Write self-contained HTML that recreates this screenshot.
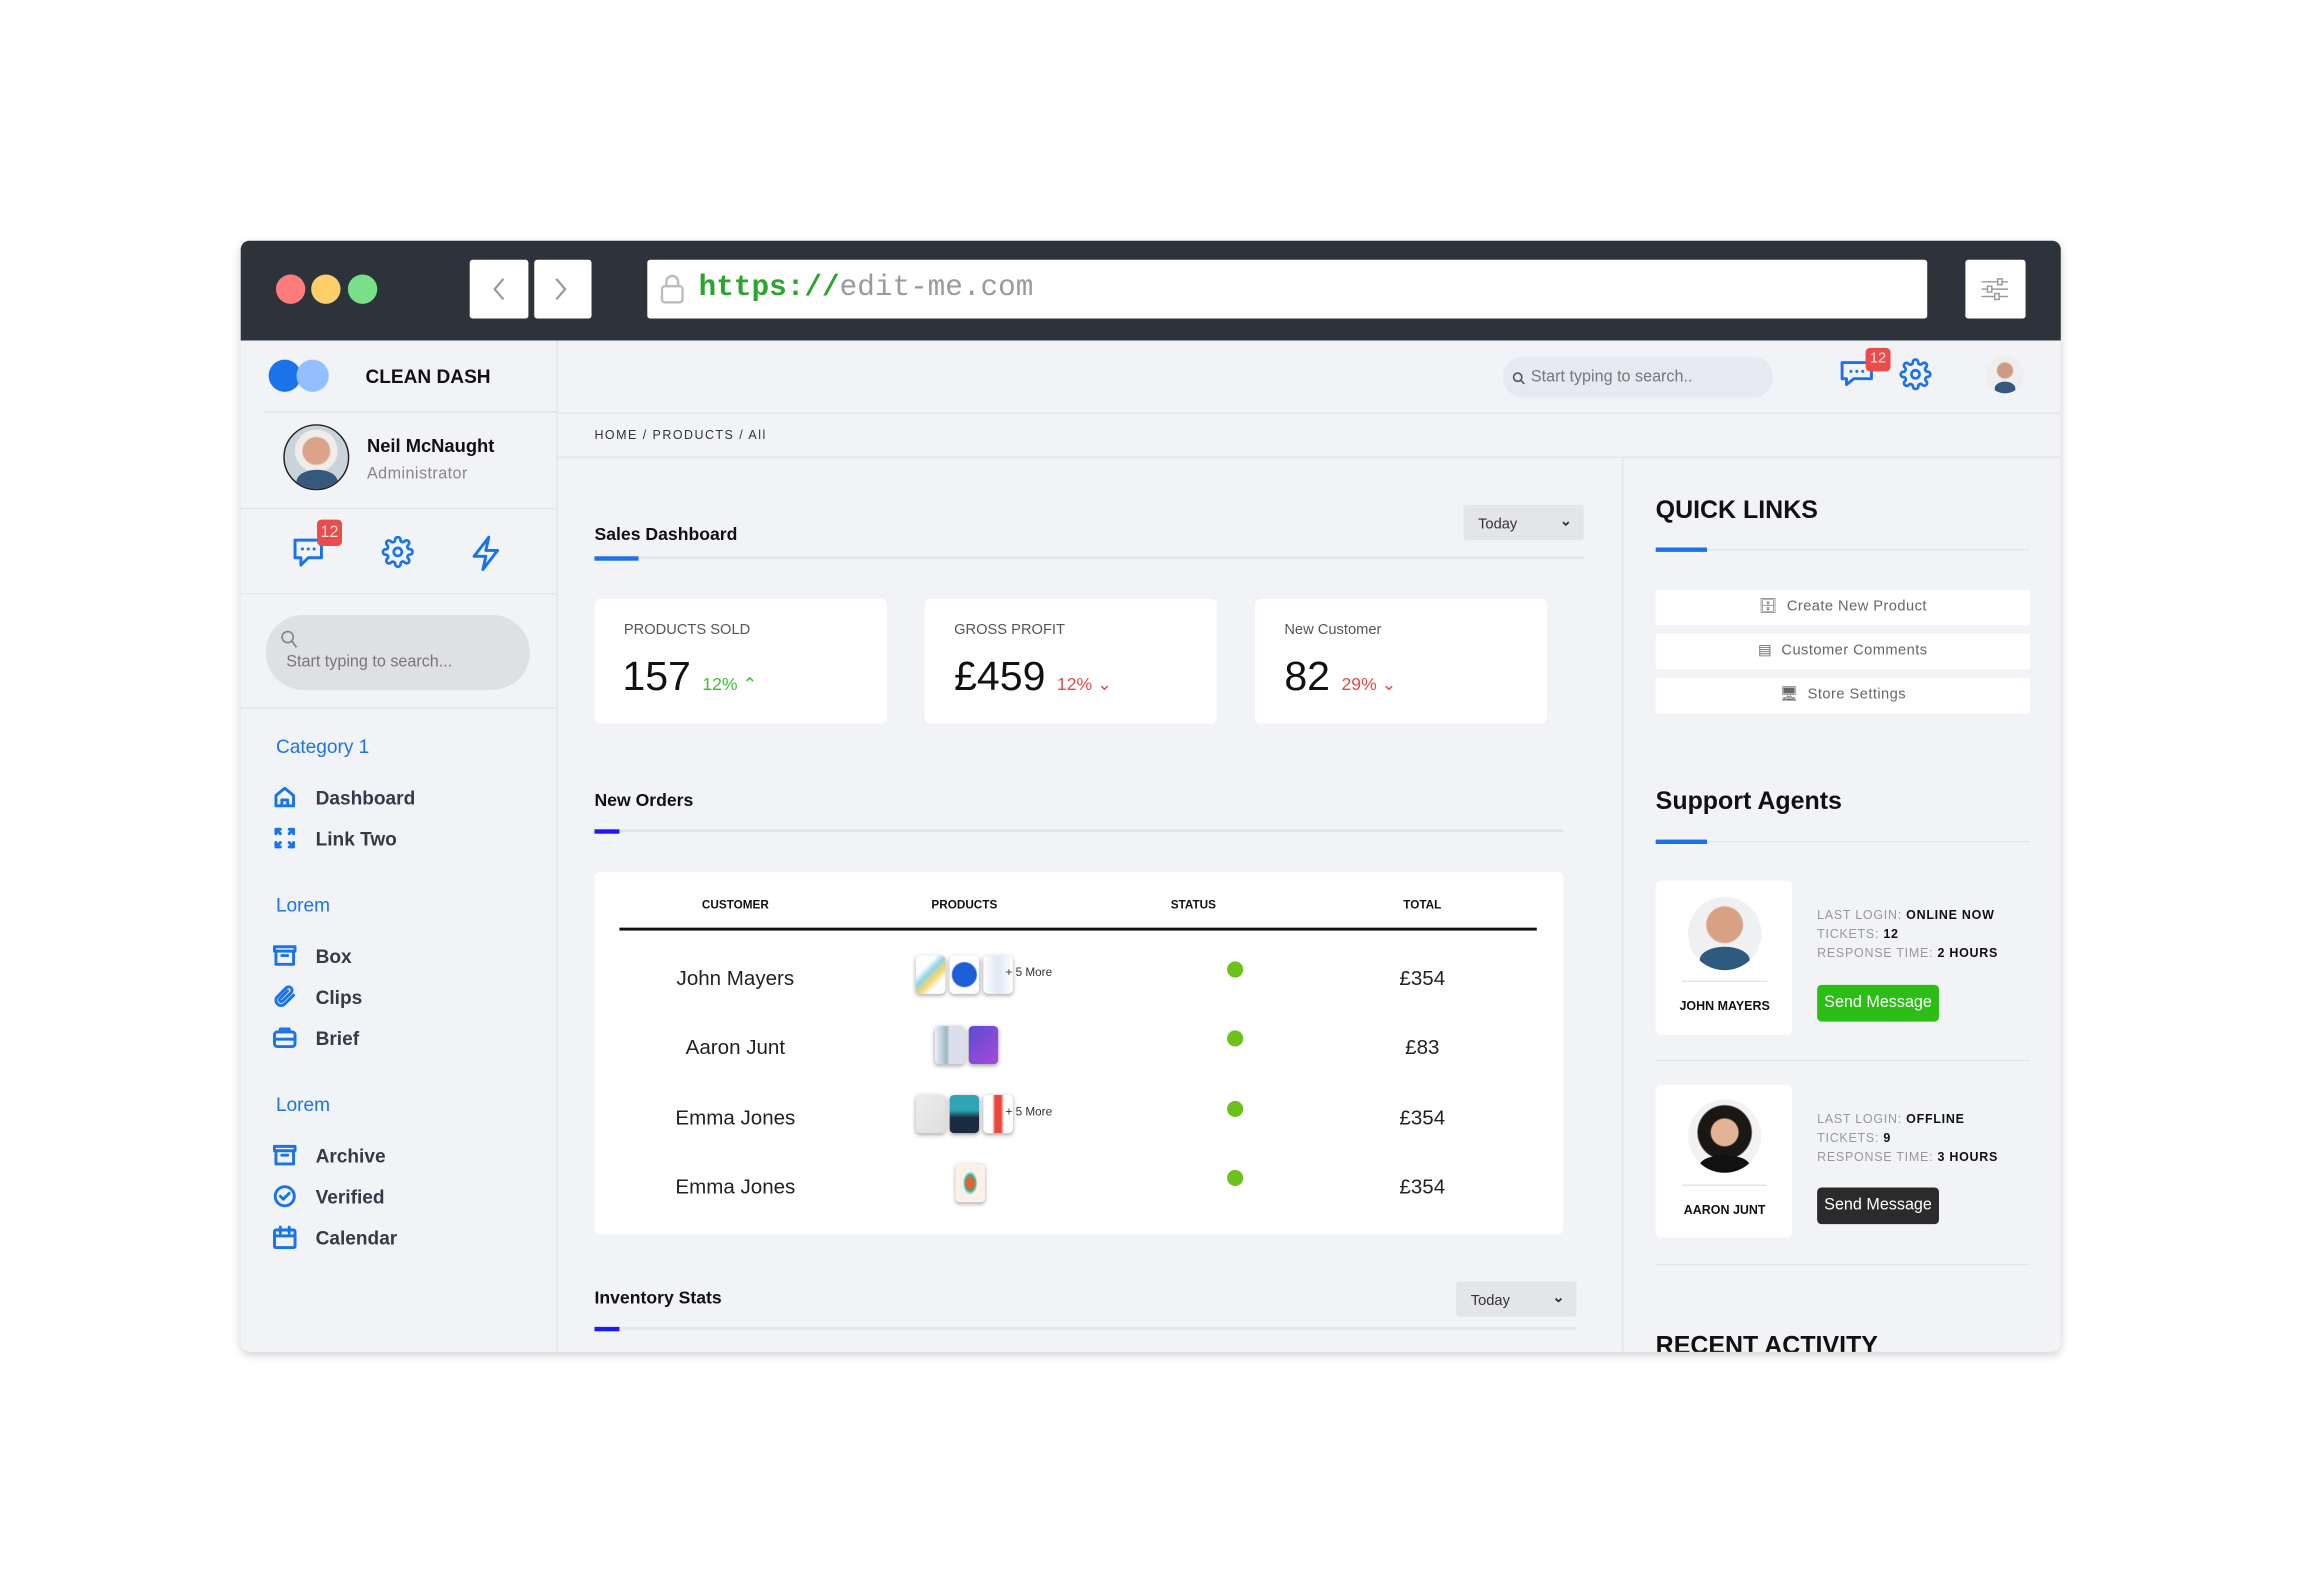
<!DOCTYPE html>
<html><head><meta charset="utf-8"><style>
*{box-sizing:border-box;margin:0;padding:0}
html,body{width:2300px;height:1591px;overflow:hidden;background:#fff;font-family:"Liberation Sans",sans-serif}
#s{position:absolute;left:0;top:0;width:1567px;height:1084px;transform:scale(1.4678);transform-origin:0 0}
.a{position:absolute}
.t{position:absolute;white-space:nowrap;line-height:1}
.frame{left:164px;top:164px;width:1240px;height:757px;background:#f2f3f7;border-radius:6px;overflow:hidden;box-shadow:0 2px 6px rgba(0,0,0,.18)}
.dot{width:20px;height:20px;border-radius:50%;top:187px}
.nb{background:#fff;border-radius:2px}
.line{height:1px;background:#e3e5ea}
.blue{background:#1a73e8}
.ic{position:absolute;fill:none;stroke:#1a73e8;stroke-width:2;stroke-linecap:round;stroke-linejoin:round}
.nav{font-size:13px;color:#343a46;font-weight:600}
.cat{font-size:13px;color:#1a73e8}
.card{background:#fff;border-radius:4px}
.lab{font-size:10px;color:#555}
.val{font-size:28px;color:#111}
.th{font-size:8px;font-weight:bold;color:#111;transform:translateX(-50%)}
.td{font-size:14px;color:#222;transform:translateX(-50%)}
.gd{width:11px;height:11px;border-radius:50%;background:#6cc21a}
.th2{width:20px;height:26px;background:#fff;border-radius:3px;box-shadow:0 1px 3px rgba(0,0,0,.35)}
.ql{background:#fff;height:24px;left:1128px;width:255px;font-size:10px;color:#666;text-align:center;line-height:24px;letter-spacing:.3px}
.inf{font-size:8.5px;color:#999;letter-spacing:.5px}
.inf b{color:#111}
.btn{font-size:11px;color:#fff;border-radius:3px;text-align:center;line-height:25px;width:83px;height:25px}
.sel{background:#e4e5e9;border-radius:2px;font-size:10px;color:#333;padding:8px 10px}
</style></head><body><div id="s">
<div class="a frame"></div>
<div class="a" style="left:164px;top:164px;width:1240px;height:68px;background:#2d333b;border-radius:6px 6px 0 0"></div>
<div class="a dot" style="left:188px;background:#fc7b7b"></div>
<div class="a dot" style="left:212px;background:#fdcf6b"></div>
<div class="a dot" style="left:237px;background:#79e08a"></div>
<div class="a nb" style="left:320px;top:177px;width:40px;height:40px"></div>
<div class="a nb" style="left:364px;top:177px;width:39px;height:40px"></div>
<svg class="a" style="left:330px;top:187px" width="60" height="20"><path d="M13 3l-6 7 6 7M49 3l6 7-6 7" stroke="#999" stroke-width="1.5" fill="none"/></svg>
<div class="a nb" style="left:441px;top:177px;width:872px;height:40px"></div>
<svg class="a" style="left:449px;top:186px" width="18" height="22"><rect x="2" y="9" width="14" height="11" rx="2" fill="none" stroke="#bbb" stroke-width="1.6"/><path d="M5 9V6a4 4 0 0 1 8 0v3" fill="none" stroke="#bbb" stroke-width="1.6"/></svg>
<div class="t" style="left:476px;top:187px;font-family:'Liberation Mono',monospace;font-size:20px"><span style="color:#2ba52e;font-weight:bold">https://</span><span style="color:#9a9a9a">edit-me.com</span></div>
<div class="a nb" style="left:1339px;top:177px;width:41px;height:40px"></div>
<svg class="a" style="left:1349px;top:188px" width="20" height="18"><path d="M1 4h18M1 9h18M1 14h18" stroke="#999" stroke-width="1"/><rect x="12" y="2" width="3" height="4" fill="#fff" stroke="#999"/><rect x="5" y="7" width="3" height="4" fill="#fff" stroke="#999"/><rect x="10" y="12" width="3" height="4" fill="#fff" stroke="#999"/></svg>

<div class="a" style="left:379px;top:232px;width:1px;height:689px;background:#e3e5ea"></div>
<div class="a" style="left:183px;top:245px;width:22px;height:22px;border-radius:50%;background:#1a73e8"></div>
<div class="a" style="left:202px;top:245px;width:22px;height:22px;border-radius:50%;background:#93bfff"></div>
<div class="t" style="left:249px;top:250px;font-size:13px;font-weight:600;color:#111">CLEAN DASH</div>
<div class="a line" style="left:180px;top:280px;width:199px"></div>
<div class="a" style="left:193px;top:289px;width:45px;height:45px;border-radius:50%;border:1.5px solid #222;background:radial-gradient(circle at 50% 40%,#d9a48a 0 9px,#f0ede8 10px 14px,#c9d3dc 15px);overflow:hidden"><div class="a" style="left:8px;top:30px;width:28px;height:16px;border-radius:50% 50% 0 0;background:#36587d"></div></div>
<div class="t" style="left:250px;top:298px;font-size:12.5px;font-weight:600;color:#111">Neil McNaught</div>
<div class="t" style="left:250px;top:318px;font-size:11px;color:#888;letter-spacing:.3px">Administrator</div>
<div class="a line" style="left:164px;top:346px;width:215px"></div>
<svg class="ic" style="left:199px;top:364px" width="24" height="26" viewBox="0 0 24 26"><path d="M2 4h18v12H11l-5 5v-5H2z"/><path d="M7 10h.1M11 10h.1M15 10h.1"/></svg>
<div class="a" style="left:216px;top:354px;width:17px;height:18px;background:#ea4b4b;border-radius:3px;color:#fdd;font-size:11px;text-align:center;line-height:18px">12</div>
<svg class="ic" style="left:260px;top:365px" width="22" height="22" viewBox="0 0 24 24"><circle cx="12" cy="12" r="3"/><path d="M19.4 15a1.7 1.7 0 0 0 .3 1.8l.1.1a2 2 0 1 1-2.8 2.8l-.1-.1a1.7 1.7 0 0 0-1.8-.3 1.7 1.7 0 0 0-1 1.5V21a2 2 0 1 1-4 0v-.1a1.7 1.7 0 0 0-1.100-1.500 1.7 1.7 0 0 0-1.800.3l-.1.1a2 2 0 1 1-2.800-2.800l.1-.1a1.7 1.7 0 0 0 .3-1.800 1.7 1.7 0 0 0-1.500-1H3a2 2 0 1 1 0-4h.1a1.7 1.7 0 0 0 1.500-1.100 1.7 1.7 0 0 0-.3-1.800l-.1-.1a2 2 0 1 1 2.800-2.800l.1.1a1.7 1.7 0 0 0 1.800.3H9a1.7 1.7 0 0 0 1-1.500V3a2 2 0 1 1 4 0v.1a1.7 1.7 0 0 0 1 1.500 1.7 1.7 0 0 0 1.800-.3l.1-.1a2 2 0 1 1 2.800 2.800l-.1.1a1.7 1.7 0 0 0-.3 1.800V9a1.7 1.7 0 0 0 1.500 1H21a2 2 0 1 1 0 4h-.1a1.7 1.7 0 0 0-1.500 1z"/></svg>
<svg class="ic" style="left:320px;top:364px" width="22" height="26" viewBox="0 0 22 26"><path d="M13 2L3 15h8l-2 9 10-13h-8z"/></svg>
<div class="a line" style="left:164px;top:404px;width:215px"></div>
<div class="a" style="left:181px;top:419px;width:180px;height:51px;border-radius:26px;background:#dfe0e4"></div>
<svg class="a" style="left:191px;top:429px" width="12" height="13"><circle cx="5" cy="5" r="3.8" fill="none" stroke="#888" stroke-width="1.2"/><path d="M8 8l3 4" stroke="#888" stroke-width="1.2"/></svg>
<div class="t" style="left:195px;top:446px;font-size:11px;color:#777">Start typing to search...</div>
<div class="a line" style="left:164px;top:482px;width:215px"></div>
<div class="t cat" style="left:188px;top:502px">Category 1</div>
<svg class="ic" style="left:186px;top:535px" width="16" height="16" viewBox="0 0 16 16"><path d="M2 7l6-5 6 5v7H2zM6 14v-4h4v4"/></svg>
<div class="t nav" style="left:215px;top:537px">Dashboard</div>
<svg class="ic" style="left:186px;top:563px" width="16" height="16" viewBox="0 0 16 16"><path d="M2 5V2h3M2 2l3 3M11 2h3v3M14 2l-3 3M2 11v3h3M2 14l3-3M14 11v3h-3M14 14l-3-3"/></svg>
<div class="t nav" style="left:215px;top:565px">Link Two</div>
<div class="t cat" style="left:188px;top:610px">Lorem</div>
<svg class="ic" style="left:186px;top:643px" width="16" height="16" viewBox="0 0 16 16"><path d="M1 2h14v3H1zM2 5v9h12V5M6 8h4"/></svg>
<div class="t nav" style="left:215px;top:645px">Box</div>
<svg class="ic" style="left:186px;top:671px" width="16" height="16" viewBox="0 0 16 16"><path d="M14 7l-6 6a3.5 3.5 0 0 1-5-5l6-6a2.3 2.3 0 0 1 3.3 3.3L6.5 11a1.2 1.2 0 0 1-1.7-1.7L10 4"/></svg>
<div class="t nav" style="left:215px;top:673px">Clips</div>
<svg class="ic" style="left:186px;top:699px" width="16" height="16" viewBox="0 0 16 16"><rect x="1" y="4" width="14" height="10" rx="2"/><path d="M5 4V2h6v2M1 9h14"/></svg>
<div class="t nav" style="left:215px;top:701px">Brief</div>
<div class="t cat" style="left:188px;top:746px">Lorem</div>
<svg class="ic" style="left:186px;top:779px" width="16" height="16" viewBox="0 0 16 16"><path d="M1 2h14v3H1zM2 5v9h12V5M6 8h4"/></svg>
<div class="t nav" style="left:215px;top:781px">Archive</div>
<svg class="ic" style="left:186px;top:807px" width="16" height="16" viewBox="0 0 16 16"><circle cx="8" cy="8" r="6.5"/><path d="M5 8l2 2 4-4"/></svg>
<div class="t nav" style="left:215px;top:809px">Verified</div>
<svg class="ic" style="left:186px;top:835px" width="16" height="16" viewBox="0 0 16 16"><rect x="1" y="3" width="14" height="12" rx="1"/><path d="M1 7h14M5 1v4M11 1v4"/></svg>
<div class="t nav" style="left:215px;top:837px">Calendar</div>

<div class="a" style="left:1024px;top:243px;width:184px;height:28px;border-radius:14px;background:#e6e9f0"></div>
<svg class="a" style="left:1030px;top:253px" width="9" height="9"><circle cx="4" cy="4" r="2.8" fill="none" stroke="#555" stroke-width="1.1"/><path d="M6 6l2.5 2.5" stroke="#555" stroke-width="1.1"/></svg>
<div class="t" style="left:1043px;top:252px;font-size:11px;color:#777">Start typing to search..</div>
<svg class="ic" style="left:1253px;top:243px" width="26" height="24" viewBox="0 0 26 24"><path d="M2 4h20v11H10l-5 4v-4H2z"/><path d="M8 10h.1M12 10h.1M16 10h.1"/></svg>
<div class="a" style="left:1271px;top:237px;width:17px;height:16px;background:#ea4b4b;border-radius:3px;color:#fdd;font-size:10px;text-align:center;line-height:16px">12</div>
<svg class="ic" style="left:1294px;top:244px" width="22" height="22" viewBox="0 0 24 24"><circle cx="12" cy="12" r="3"/><path d="M19.4 15a1.7 1.7 0 0 0 .3 1.8l.1.1a2 2 0 1 1-2.8 2.8l-.1-.1a1.7 1.7 0 0 0-1.8-.3 1.7 1.7 0 0 0-1 1.5V21a2 2 0 1 1-4 0v-.1a1.7 1.7 0 0 0-1.1-1.5 1.7 1.7 0 0 0-1.8.3l-.1.1a2 2 0 1 1-2.8-2.8l.1-.1a1.7 1.7 0 0 0 .3-1.8 1.7 1.7 0 0 0-1.5-1H3a2 2 0 1 1 0-4h.1a1.7 1.7 0 0 0 1.5-1.1 1.7 1.7 0 0 0-.3-1.8l-.1-.1a2 2 0 1 1 2.8-2.8l.1.1a1.7 1.7 0 0 0 1.8.3H9a1.7 1.7 0 0 0 1-1.5V3a2 2 0 1 1 4 0v.1a1.7 1.7 0 0 0 1 1.5 1.7 1.7 0 0 0 1.8-.3l.1-.1a2 2 0 1 1 2.8 2.8l-.1.1a1.7 1.7 0 0 0-.3 1.8V9a1.7 1.7 0 0 0 1.5 1H21a2 2 0 1 1 0 4h-.1a1.7 1.7 0 0 0-1.5 1z"/></svg>
<div class="a" style="left:1353px;top:242px;width:26px;height:26px;border-radius:50%;background:radial-gradient(circle at 50% 40%,#cf9b80 0 5px,#eee 6px);overflow:hidden"><div class="a" style="left:6px;top:18px;width:14px;height:9px;background:#36587d;border-radius:50% 50% 0 0"></div></div>
<div class="a line" style="left:380px;top:281px;width:1024px"></div>
<div class="t" style="left:405px;top:292px;font-size:8.5px;color:#333;letter-spacing:1px">HOME / PRODUCTS / All</div>
<div class="a line" style="left:380px;top:311px;width:1024px"></div>
<div class="a line" style="left:1105px;top:311px;width:1px;height:610px"></div>

<div class="t" style="left:405px;top:358px;font-size:12px;font-weight:600;color:#111">Sales Dashboard</div>
<div class="a sel" style="left:997px;top:344px;width:82px;height:24px">Today<span style="position:absolute;right:8px;top:6px;font-size:10px;font-weight:bold">&#8964;</span></div>
<div class="a line" style="left:405px;top:379px;width:674px;height:2px"></div>
<div class="a blue" style="left:405px;top:379px;width:30px;height:3px"></div>
<div class="a card" style="left:405px;top:408px;width:199px;height:85px"></div>
<div class="a card" style="left:630px;top:408px;width:199px;height:85px"></div>
<div class="a card" style="left:855px;top:408px;width:199px;height:85px"></div>
<div class="t lab" style="left:425px;top:425px">PRODUCTS SOLD</div>
<div class="t lab" style="left:650px;top:425px">GROSS PROFIT</div>
<div class="t lab" style="left:875px;top:425px">New Customer</div>
<div class="t val" style="left:424px;top:447px">157 <span style="font-size:12px;color:#3cbf2c">12% &#8963;</span></div>
<div class="t val" style="left:650px;top:447px">£459 <span style="font-size:12px;color:#e24a4a">12% &#8964;</span></div>
<div class="t val" style="left:875px;top:447px">82 <span style="font-size:12px;color:#e24a4a">29% &#8964;</span></div>

<div class="t" style="left:405px;top:539px;font-size:12px;font-weight:600;color:#111">New Orders</div>
<div class="a line" style="left:405px;top:565px;width:660px;height:2px"></div>
<div class="a" style="left:405px;top:565px;width:17px;height:3px;background:#1a1aff"></div>
<div class="a card" style="left:405px;top:594px;width:660px;height:247px"></div>
<div class="t th" style="left:501px;top:613px">CUSTOMER</div>
<div class="t th" style="left:657px;top:613px">PRODUCTS</div>
<div class="t th" style="left:813px;top:613px">STATUS</div>
<div class="t th" style="left:969px;top:613px">TOTAL</div>
<div class="a" style="left:422px;top:632px;width:625px;height:1.5px;background:#111"></div>

<div class="t td" style="left:501px;top:659px">John Mayers</div>
<div class="t td" style="left:501px;top:706px">Aaron Junt</div>
<div class="t td" style="left:501px;top:754px">Emma Jones</div>
<div class="t td" style="left:501px;top:801px">Emma Jones</div>
<div class="t td" style="left:969px;top:659px">£354</div>
<div class="t td" style="left:969px;top:706px">£83</div>
<div class="t td" style="left:969px;top:754px">£354</div>
<div class="t td" style="left:969px;top:801px">£354</div>
<div class="a gd" style="left:836px;top:655px"></div>
<div class="a gd" style="left:836px;top:702px"></div>
<div class="a gd" style="left:836px;top:750px"></div>
<div class="a gd" style="left:836px;top:797px"></div>
<div class="a th2" style="left:624px;top:651px;background:linear-gradient(135deg,#fff 30%,#8fd3e8 45%,#f3d46a 60%,#fff 75%)"></div>
<div class="a th2" style="left:647px;top:651px;background:radial-gradient(circle,#1d5fd6 0 8px,#fff 9px)"></div>
<div class="a th2" style="left:670px;top:651px;background:linear-gradient(90deg,#fff,#dce9f5,#fff)"></div>
<div class="t" style="left:685px;top:659px;font-size:8px;color:#333">+ 5 More</div>
<div class="a th2" style="left:637px;top:699px;background:linear-gradient(90deg,#eef,#9bb 40%,#dde 50%)"></div>
<div class="a th2" style="left:660px;top:699px;background:linear-gradient(135deg,#5b4bd6,#a64bd6)"></div>
<div class="a th2" style="left:624px;top:746px;background:linear-gradient(135deg,#eee,#ddd)"></div>
<div class="a th2" style="left:647px;top:746px;background:linear-gradient(180deg,#2fa5b5 40%,#1c2b40 60%)"></div>
<div class="a th2" style="left:670px;top:746px;background:linear-gradient(90deg,#fff 30%,#e9483b 40%,#e9483b 60%,#fff 70%)"></div>
<div class="t" style="left:685px;top:754px;font-size:8px;color:#333">+ 5 More</div>
<div class="a th2" style="left:651px;top:793px;background:radial-gradient(ellipse 5px 8px,#e8602a 0 50%,#2bb3a0 70%,#fdf0e8 100%)"></div>

<div class="t" style="left:405px;top:878px;font-size:12px;font-weight:600;color:#111">Inventory Stats</div>
<div class="a sel" style="left:992px;top:873px;width:82px;height:24px">Today<span style="position:absolute;right:8px;top:6px;font-size:10px;font-weight:bold">&#8964;</span></div>
<div class="a line" style="left:405px;top:904px;width:669px;height:2px"></div>
<div class="a" style="left:405px;top:904px;width:17px;height:3px;background:#1a1aff"></div>

<div class="t" style="left:1128px;top:339px;font-size:17px;font-weight:600;color:#111">QUICK LINKS</div>
<div class="a line" style="left:1128px;top:374px;width:255px"></div>
<div class="a blue" style="left:1128px;top:373px;width:35px;height:3px"></div>
<div class="a ql" style="top:402px">&#128452;&#xFE0E; &nbsp;Create New Product</div>
<div class="a ql" style="top:432px">&#9636; &nbsp;Customer Comments</div>
<div class="a ql" style="top:462px">&#128421;&#xFE0E; &nbsp;Store Settings</div>
<div class="t" style="left:1128px;top:537px;font-size:17px;font-weight:600;color:#111">Support Agents</div>
<div class="a line" style="left:1128px;top:573px;width:255px"></div>
<div class="a blue" style="left:1128px;top:572px;width:35px;height:3px"></div>

<div class="a card" style="left:1128px;top:600px;width:93px;height:105px"></div>
<div class="a" style="left:1150px;top:611px;width:50px;height:50px;border-radius:50%;background:radial-gradient(circle at 50% 38%,#d8a183 0 12px,#eef0f2 13px);overflow:hidden"><div class="a" style="left:8px;top:34px;width:34px;height:18px;border-radius:50% 50% 0 0;background:#2f5a80"></div></div>
<div class="a line" style="left:1146px;top:668px;width:58px"></div>
<div class="t" style="left:1175px;top:681px;font-size:8.5px;font-weight:bold;color:#111;transform:translateX(-50%)">JOHN MAYERS</div>
<div class="t inf" style="left:1238px;top:619px">LAST LOGIN: <b>ONLINE NOW</b></div>
<div class="t inf" style="left:1238px;top:632px">TICKETS: <b>12</b></div>
<div class="t inf" style="left:1238px;top:645px">RESPONSE TIME: <b>2 HOURS</b></div>
<div class="a btn" style="left:1238px;top:671px;background:#2cbd16">Send Message</div>
<div class="a line" style="left:1128px;top:722px;width:255px"></div>

<div class="a card" style="left:1128px;top:739px;width:93px;height:104px"></div>
<div class="a" style="left:1150px;top:749px;width:50px;height:50px;border-radius:50%;background:radial-gradient(circle at 50% 45%,#e2b394 0 9px,#1b1714 10px 18px,#f2f2f2 19px);overflow:hidden"><div class="a" style="left:8px;top:38px;width:34px;height:14px;border-radius:50% 50% 0 0;background:#111"></div></div>
<div class="a line" style="left:1146px;top:807px;width:58px"></div>
<div class="t" style="left:1175px;top:820px;font-size:8.5px;font-weight:bold;color:#111;transform:translateX(-50%)">AARON JUNT</div>
<div class="t inf" style="left:1238px;top:758px">LAST LOGIN: <b>OFFLINE</b></div>
<div class="t inf" style="left:1238px;top:771px">TICKETS: <b>9</b></div>
<div class="t inf" style="left:1238px;top:784px">RESPONSE TIME: <b>3 HOURS</b></div>
<div class="a btn" style="left:1238px;top:809px;background:#2b2b2b">Send Message</div>
<div class="a line" style="left:1128px;top:861px;width:255px"></div>
<div class="a" style="left:1128px;top:906px;width:200px;height:15px;overflow:hidden"><div class="t" style="left:0;top:2px;font-size:17px;font-weight:600;color:#111">RECENT ACTIVITY</div></div>
</div></body></html>
